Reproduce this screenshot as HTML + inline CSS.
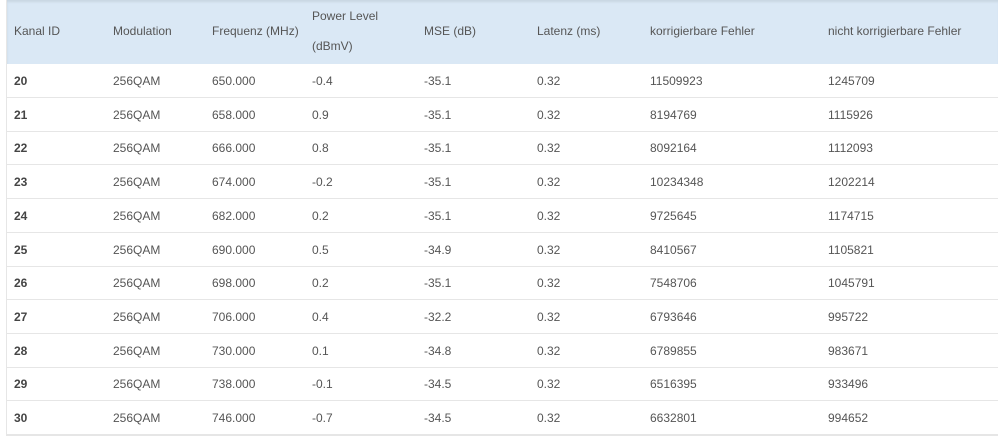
<!DOCTYPE html>
<html><head><meta charset="utf-8"><style>
*{margin:0;padding:0;box-sizing:border-box}
body{width:998px;height:437px;background:#fff;font-family:"Liberation Sans",sans-serif;font-size:12px;color:#555;overflow:hidden;position:relative}
.wrap{position:absolute;left:6px;top:0;width:992px;height:436px;border-left:1px solid #e6e6e6;border-bottom:1px solid #e6e6e6}
.hd{position:absolute;left:0;top:0;width:992px;height:64px;background:#dae8f5;box-shadow:inset 0 2px 2px rgba(0,0,0,0.08)}
.row{position:absolute;left:0;width:992px;height:34px;border-bottom:1px solid #e6e6e6}
.c{position:absolute;white-space:nowrap}
.b{font-weight:bold;color:#444}
</style></head><body>
<div class="wrap">
<div class="hd">
<span class="c" style="left:7px;top:24px">Kanal ID</span>
<span class="c" style="left:106px;top:24px">Modulation</span>
<span class="c" style="left:205px;top:24px">Frequenz (MHz)</span>
<span class="c" style="left:305px;top:9px">Power Level</span>
<span class="c" style="left:305px;top:39px">(dBmV)</span>
<span class="c" style="left:417px;top:24px">MSE (dB)</span>
<span class="c" style="left:530px;top:24px">Latenz (ms)</span>
<span class="c" style="left:643px;top:24px">korrigierbare Fehler</span>
<span class="c" style="left:821px;top:24px">nicht korrigierbare Fehler</span>
</div>
</div>
<div id="rows"></div>
<script>
var d=[[20,"650.000","-0.4","-35.1","11509923","1245709"],[21,"658.000","0.9","-35.1","8194769","1115926"],[22,"666.000","0.8","-35.1","8092164","1112093"],[23,"674.000","-0.2","-35.1","10234348","1202214"],[24,"682.000","0.2","-35.1","9725645","1174715"],[25,"690.000","0.5","-34.9","8410567","1105821"],[26,"698.000","0.2","-35.1","7548706","1045791"],[27,"706.000","0.4","-32.2","6793646","995722"],[28,"730.000","0.1","-34.8","6789855","983671"],[29,"738.000","-0.1","-34.5","6516395","933496"],[30,"746.000","-0.7","-34.5","6632801","994652"]];
var h="";
d.forEach(function(r,i){var t=64+i*33.7;
h+='<div class="row" style="left:6px;top:'+t+'px"><span class="c b" style="left:8px;top:10px">'+r[0]+'</span><span class="c" style="left:107px;top:10px">256QAM</span><span class="c" style="left:206px;top:10px">'+r[1]+'</span><span class="c" style="left:306px;top:10px">'+r[2]+'</span><span class="c" style="left:418px;top:10px">'+r[3]+'</span><span class="c" style="left:531px;top:10px">0.32</span><span class="c" style="left:644px;top:10px">'+r[4]+'</span><span class="c" style="left:822px;top:10px">'+r[5]+'</span></div>';});
document.getElementById("rows").innerHTML=h;
</script>
</body></html>
